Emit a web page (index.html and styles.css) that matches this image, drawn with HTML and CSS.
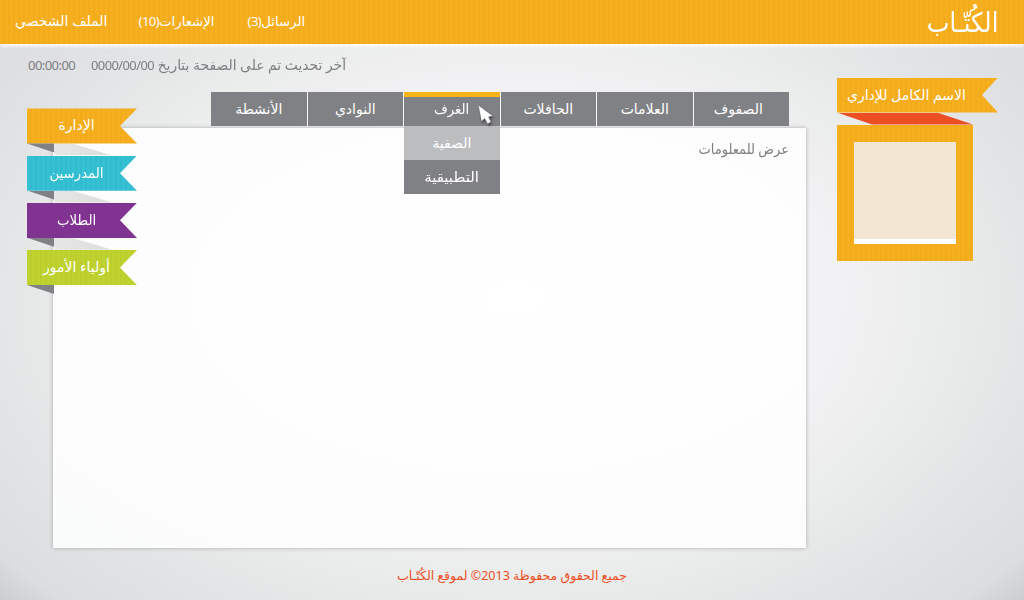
FILE: index.html
```html
<!DOCTYPE html>
<html lang="ar">
<head>
<meta charset="utf-8">
<title>الكُتّاب</title>
<link rel="stylesheet" href="styles.css">
</head>
<body>
<header class="topbar woven">
  <nav class="account" dir="ltr">
    <a class="link-profile" dir="rtl">الملف الشخصي</a>
    <a class="link-alerts" dir="rtl">الإشعارات<span class="num">(10)</span></a>
    <a class="link-mail" dir="rtl">الرسائل<span class="num">(3)</span></a>
  </nav>
  <h1 class="brand" dir="rtl">الكُتّـاب</h1>
</header>
<div class="updated"><span class="num">00:00:00</span><span class="date" dir="rtl">آخر تحديث تم على الصفحة بتاريخ <span class="num">0000/00/00</span></span></div>
<div class="layout">
  <aside class="side">
    <div class="tag orange"><div class="ribbon"><span dir="rtl">الإدارة</span></div></div>
    <div class="tag cyan"><div class="ribbon"><span class="tight" dir="rtl">المدرسين</span></div></div>
    <div class="tag purple"><div class="ribbon"><span class="tight" dir="rtl">الطلاب</span></div></div>
    <div class="tag lime"><div class="ribbon"><span dir="rtl">أولياء الأمور</span></div></div>
  </aside>
  <main class="main">
    <nav class="tabs" dir="rtl">
      <a class="tab first"><span>الصفوف</span></a>
      <a class="tab"><span>العلامات</span></a>
      <a class="tab"><span>الحافلات</span></a>
      <div class="tab active"><span class="tight">الغرف</span>
        <div class="menu">
          <a class="hover"><span>الصفية</span></a>
          <a><span class="wide">التطبيقية</span></a>
        </div>
        <svg class="cursor" viewBox="0 0 20 24" width="20" height="24"><path d="M2.3 2.2L5.6 18.2 8.7 15.4 11.6 20.8 14.9 19.1 12.5 13.8 16.7 13z" fill="#fff" stroke="#666" stroke-width=".3"/></svg>
      </div>
      <a class="tab"><span>النوادي</span></a>
      <a class="tab"><span>الأنشطة</span></a>
    </nav>
    <section class="panel" dir="rtl"><p>عرض للمعلومات</p></section>
  </main>
  <aside class="person">
    <div class="name woven"><span dir="rtl">الاسم الكامل للإداري</span></div>
    <div class="fold"></div>
    <div class="frame woven"><div class="photo"></div></div>
  </aside>
</div>
<footer class="footer" dir="rtl"><span>جميع الحقوق محفوظة 2013© لموقع الكُتّـاب</span></footer>
</body>
</html>
```
FILE: styles.css
```css
* { box-sizing: border-box; }
body {
  margin: 0;
  width: 1024px;
  height: 600px;
  overflow: hidden;
  display: flex;
  flex-direction: column;
  font: 14px/20px "Noto Sans", "DejaVu Sans", sans-serif;
  color: #7d7e81;
  background: radial-gradient(ellipse 620px 410px at 512px 300px, #f8f8f9 0%, #f2f2f4 52%, #ebecec 68%, #e3e4e5 85%, #dcdddf 103%, #b9babd 119%);
}
h1, p { margin: 0; font-weight: normal; }
span { display: inline-block; white-space: nowrap; }
.num { font-size: 13px; letter-spacing: -.55px; }
.tight { transform: scaleX(.95); }
.wide { transform: scaleX(1.07); }
.woven {
  background: repeating-linear-gradient(90deg, #f6af1e 0 3px, #f3aa1b 3px 5px);
}
.topbar {
  height: 44px;
  flex: none;
  display: flex;
  justify-content: space-between;
  padding: 0 26px 0 15px;
  color: #fff;
  box-shadow: 0 2px 4px #fff;
}
.account { display: flex; gap: 31px; padding-top: 11px; }
.account a { white-space: nowrap; }
.link-alerts, .link-mail { font-size: 13.3px; }
.link-mail { margin-left: 2px; }
.brand { font-size: 27px; line-height: 44px; transform: scaleX(.89); transform-origin: right; }
.updated { height: 33px; flex: none; padding: 11px 0 0 28px; display: flex; gap: 16px; }
.date { transform: scaleX(.99); transform-origin: left; }
.layout { display: grid; grid-template-columns: 26px 753px 192px; margin-left: 27px; height: 471px; flex: none; }
.side { padding-top: 31.4px; display: grid; gap: 12px; align-content: start; z-index: 2; width: 110px; }
.tag { height: 35.2px; position: relative; }
.ribbon {
  height: 35.2px;
  width: 110px;
  text-align: center;
  padding: 7px 11px 0 0;
  color: #fff;
  clip-path: polygon(0 0, 100% 0, 93px 50%, 100% 100%, 0 100%);
}
.tag::after {
  content: "";
  position: absolute;
  left: 0;
  top: 35px;
  width: 27px;
  height: 9px;
  background: #808184;
  clip-path: polygon(0 0, 100% 0, 100% 100%);
}
.tag:not(.lime)::before {
  content: "";
  position: absolute;
  left: 27px;
  top: 35px;
  width: 58px;
  height: 12px;
  background: linear-gradient(90deg, #e6e6e7, #dcddde);
  clip-path: polygon(0 0, 18px 0, 100% 100%, 0 100%);
}
.orange .ribbon { background: repeating-linear-gradient(90deg, #f6af1e 0 3px, #f3aa1b 3px 5px); }
.cyan .ribbon { background: repeating-linear-gradient(90deg, #35c0d4 0 3px, #30bbcf 3px 5px); }
.purple .ribbon { background: #803390; }
.lime .ribbon { background: repeating-linear-gradient(90deg, #bfd22f 0 3px, #bbce2c 3px 5px); }
.main { padding-top: 15px; }
.tabs { display: flex; gap: 1px; height: 34px; width: 578px; margin-left: 158px; position: relative; z-index: 1; background: #f6f6f6; }
.tab { flex: 1; background: #808184; color: #fff; text-align: center; padding-top: 7px; position: relative; }
.first span { margin-right: 4px; }
.first span { margin: 0 4px 0 0; transform: translateX(-1px); }
.active { box-shadow: inset 0 5px #f8b517; }
.menu { position: absolute; top: 34px; left: 0; right: 0; display: grid; grid-auto-rows: 34px; }
.menu a { background: #808184; padding-top: 7px; }
.menu .hover { background: #bcbdbf; }
.cursor { position: absolute; left: 72px; top: 11px; filter: drop-shadow(1px 2px 1px #444); }
.panel {
  height: 420px;
  margin-top: 2px;
  padding: 11px 17px;
  background: radial-gradient(ellipse at 460px 170px, #fff 0, #fdfdfd 60%, #fafbfb 100%);
  box-shadow: 0 0 4px #aaa;
}
.panel p { transform: scaleX(.93); transform-origin: right; }
.person { margin-left: 31px; width: 161px; padding-top: .5px; }
.name { height: 35px; padding: 7px 0 0 10px; color: #fff; clip-path: polygon(0 0, 100% 0, 145px 50%, 100% 100%, 0 100%); }
.name span { margin-top: -1px; }
.fold { height: 12px; width: 136px; background: #ed4f24; clip-path: polygon(0 0, 100px 0, 100% 100%, 35px 100%); }
.frame { width: 136px; height: 136px; padding: 17px; }
.photo { height: 102px; background: #f3e6d3; border-bottom: 5px solid #fff; }
.footer { text-align: center; color: #ed4f24; font-size: 12.5px; padding-top: 17.5px; }
```
